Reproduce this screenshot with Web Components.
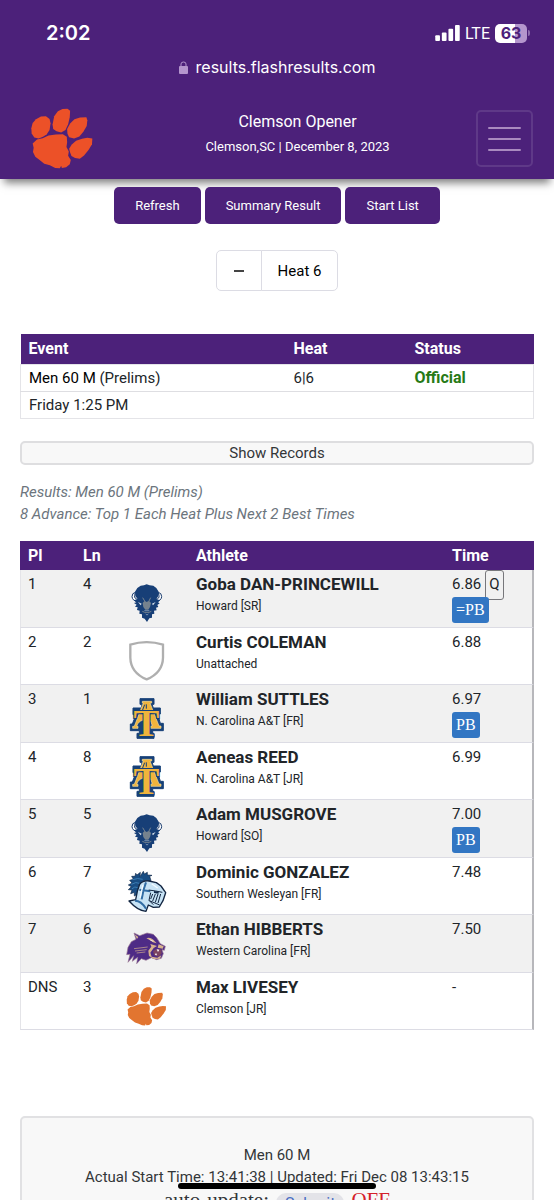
<!DOCTYPE html>
<html lang="en">
<head>
<meta charset="utf-8">
<meta name="viewport" content="width=device-width, initial-scale=1">
<title>Clemson Opener</title>
<style>
  body {
    background: #ffffff;
    color: #212529;
    font-family: Roboto, sans-serif;
    margin: 0;
  }
</style>
</head>
<body>
<flash-app></flash-app>

<script>
// Paw drawing is shared by the header and the Clemson row
const PAW = /* template */ `
  <path d="M94 386 L98 370 L108 359 L123 351 L138 350 L149 358 L152 371 L149 391 L140 405 L129 412 L116 417 L103 414 L95 402 Z"/>
  <path d="M158 375 L163 350 L174 335 L188 328 L203 327 L211 333 L210 352 L205 374 L197 391 L184 399 L170 395 L160 388 Z"/>
  <path d="M203 403 L202 388 L211 372 L224 359 L241 354 L260 353 L263 362 L261 379 L251 397 L239 411 L223 417 L208 413 Z"/>
  <path d="M98 432 L111 420 L128 416 L146 408 L168 405 L189 404 L201 412 L202 428 L200 443 L207 456 L205 469 L213 482 L210 495 L199 504 L186 506 L184 499 L180 507 L166 506 L150 498 L133 493 L119 482 L106 472 L99 458 L101 445 Z"/>
  <path d="M211 459 L208 448 L216 435 L229 424 L247 418 L263 415 L278 417 L277 434 L267 451 L253 468 L240 478 L226 476 L215 470 Z"/>
`;

const LOGOS = {
  clemson: /* template */ `
    <svg viewBox="86 322 206 196" fill="#e27530" aria-hidden="true">${PAW}</svg>`,

  howard: /* template */ `
    <svg viewBox="45 39 132 126" aria-hidden="true">
      <path d="M76 67 Q66 69 66 80 Q67 92 83 95 L84 88 Q72 86 74 77 Z M145 67 Q155 69 155 80 Q154 92 138 95 L137 88 Q149 86 147 77 Z" fill="#ffffff" stroke="#173a6d" stroke-width="3"/>
      <path d="M110 43 L119 46 L130 47 L139 54 L146 65 L145 78 L139 87 L150 91 L144 97 L149 100 L142 105 L145 111 L138 113 L140 121 L132 122 L133 131 L126 133 L126 143 L118 145 L111 156 L104 146 L96 143 L96 133 L88 131 L89 122 L81 120 L83 112 L75 110 L80 104 L72 99 L79 97 L71 91 L83 87 L76 78 L75 65 L82 54 L92 47 L102 46 Z" fill="#173f77"/>
      <path d="M98 99 L104 92 L110 96 L117 92 L123 99 L120 111 L115 119 L106 119 L100 111 Z" fill="#75828e"/>
      <path d="M98 83 L104 93 M122 83 L117 93 M97 124 L104 127 L117 127 L124 124" fill="none" stroke="#75828e" stroke-width="3"/>
      <path d="M84 96 L95 101 L92 106 Z M137 96 L126 101 L129 106 Z" fill="#dce5ed"/>
      <path d="M103 122 H118 M107 132 L111 135 L115 132" fill="none" stroke="#a8b8c8" stroke-width="2"/>
    </svg>`,

  unattached: /* template */ `
    <svg viewBox="45 213 132 126" aria-hidden="true">
      <path d="M61 224 Q110 209 159 224 V263 Q158 308 110 328 Q62 308 61 263 Z" fill="#ffffff" stroke="#afafaf" stroke-width="7"/>
    </svg>`,

  // Initial over a gold tower with a navy edge
  aggies: /* template */ `
    <svg viewBox="45 24 132 126" aria-hidden="true">
      <path d="M90 26 H132 V43 H126 L130 54 H151 V72 H143 L151 100 H160 V122 H128 V130 H132 V145 H81 V130 H88 V122 H61 V102 H67 L78 74 H69 V54 H94 L96 43 H90 Z" fill="#174178" stroke="#174178" stroke-width="3" stroke-linejoin="round"/>
      <path d="M97 34 H125 V39 H120 L147 108 H153 V115 H122 V108 H127 L122 93 Q99 82 83 101 L80 109 H84 V115 H68 V109 H73 L100 39 H97 Z" fill="#f0b43c" stroke="#f7df9f" stroke-width="2"/>
      <path d="M104 44 L97 62 M109 43 V56" stroke="#174178" stroke-width="3"/>
      <text x="109" y="138" font-family="Liberation Serif, serif" font-weight="700" font-size="116" text-anchor="middle" fill="#f0b43c" stroke="#174178" stroke-width="6" paint-order="stroke">T</text>
    </svg>`,

  knight: /* template */ `
    <svg viewBox="45 30 132 126" aria-hidden="true">
      <path d="M90 47 L91 34 L81 42 L77 37 L75 46 L65 46 L70 55 L59 58 L66 66 L55 72 L64 77 L55 86 L66 87 L62 98 L73 94 L73 105 L83 99 L87 71 L101 59 L123 59 L119 46 L126 43 L112 42 L112 34 L103 39 L100 31 Z" fill="#194d83" stroke="#10294a" stroke-width="2"/>
      <path d="M67 56 Q84 50 98 55 M64 70 Q79 61 88 67 M65 84 Q75 74 83 80" fill="none" stroke="#3c7eb4" stroke-width="3"/>
      <path d="M89 70 Q98 58 117 60 L139 65 L153 75 L167 95 L159 119 L148 138 L130 139 L115 132 L108 151 Q84 150 57 120 L77 116 L82 91 Z" fill="#c7e3f5" stroke="#122541" stroke-width="4" stroke-linejoin="round"/>
      <path d="M108 64 L101 85 L95 115 M88 86 L121 91 M75 119 Q94 119 108 143" fill="none" stroke="#326da4" stroke-width="6"/>
      <path d="M116 87 L137 90 L157 94 M122 95 L117 118 L130 131 M118 119 L149 132" fill="none" stroke="#122541" stroke-width="3"/>
      <path d="M128 99 L122 114 M136 99 L128 120 M144 99 L136 124 M152 99 L144 126" fill="none" stroke="#122541" stroke-width="3"/>
      <path d="M132 93 L146 95" stroke="#10294a" stroke-width="6"/>
      <path d="M99 72 L90 111 M125 68 L143 81" fill="none" stroke="#f3fbff" stroke-width="4"/>
    </svg>`,

  catamount: /* template */ `
    <svg viewBox="45 204 132 126" aria-hidden="true">
      <path d="M72 219 L89 227 L111 219 L130 223 L140 233 L151 251 L166 259 L163 271 L156 269 L160 281 L154 295 L140 299 L124 293 L108 301 L94 296 L80 311 L83 292 L67 304 L71 287 L54 307 L60 283 L50 284 L54 262 L64 245 L78 238 Z" fill="#4e2b86" stroke="#9b7892" stroke-width="2"/>
      <path d="M74 223 L85 231 L81 237 M109 235 Q119 230 130 239 L140 250 L129 247 L119 240 Z M146 253 L161 259 L158 266 L143 263 Z" fill="#d8b38e"/>
      <path d="M121 252 L141 258 L131 264 L121 278 L125 290 L142 293 L154 286 L150 296 L132 297 L117 288 L115 272 L124 260 Z" fill="#d8b38e"/>
      <path d="M129 273 L142 266 L154 269 L155 281 L145 290 L132 286 Z" fill="#7c4461"/>
      <path d="M140 268 L144 276 L148 269 M135 285 L138 278 L141 286" fill="#ffffff"/>
      <path d="M72 266 L113 261 M75 273 L110 269 M80 279 L106 276" stroke="#d8b38e" stroke-width="2"/>
      <path d="M119 239 L130 244" stroke="#ffffff" stroke-width="2"/>
    </svg>`
};

const RESULTS = [
  {place: '1', lane: '4', logo: 'howard', name: 'Goba DAN-PRINCEWILL', team: 'Howard [SR]', time: '6.86', qualified: 'Q', best: '=PB'},
  {place: '2', lane: '2', logo: 'unattached', name: 'Curtis COLEMAN', team: 'Unattached', time: '6.88'},
  {place: '3', lane: '1', logo: 'aggies', name: 'William SUTTLES', team: 'N. Carolina A&amp;T [FR]', time: '6.97', best: 'PB'},
  {place: '4', lane: '8', logo: 'aggies', name: 'Aeneas REED', team: 'N. Carolina A&amp;T [JR]', time: '6.99'},
  {place: '5', lane: '5', logo: 'howard', name: 'Adam MUSGROVE', team: 'Howard [SO]', time: '7.00', best: 'PB'},
  {place: '6', lane: '7', logo: 'knight', name: 'Dominic GONZALEZ', team: 'Southern Wesleyan [FR]', time: '7.48'},
  {place: '7', lane: '6', logo: 'catamount', name: 'Ethan HIBBERTS', team: 'Western Carolina [FR]', time: '7.50'},
  {place: 'DNS', lane: '3', logo: 'clemson', name: 'Max LIVESEY', team: 'Clemson [JR]', time: '-'}
];

// Shared by every element
// Puts the markup in an open root
class FlashElement extends HTMLElement {
  constructor() {
    super();

    const template = document.createElement( 'template' );
    template.innerHTML = this.constructor.markup;

    const shadowRoot = this.attachShadow( {mode: 'open'} );
    shadowRoot.appendChild( template.content.cloneNode( true ) );
  }
}

class FlashStatusBar extends FlashElement {
  static markup = /* template */ `
    <style>
      :host {
        background: #4c217a;
        color: #ffffff;
        display: block;
        font-family: Inter, sans-serif;
      }

      .device {
        align-items: center;
        display: flex;
        height: 34px;
        justify-content: space-between;
        padding: 16px 24px 0 46px;
      }

      .clock {
        font-size: 20px;
        font-weight: 600;
      }

      .signal {
        align-items: center;
        display: flex;
        font-family: Roboto, sans-serif;
        font-size: 16px;
        gap: 5px;
      }

      .battery {
        align-items: center;
        background: linear-gradient( 90deg, #ffffff 63%, #b496cd 63% );
        border-radius: 5px;
        color: #4c217a;
        display: flex;
        font-family: Inter, sans-serif;
        font-size: 16px;
        font-weight: 700;
        height: 19px;
        justify-content: center;
        width: 32px;
      }

      .level {
        align-items: center;
        display: flex;
        gap: 1px;
      }

      .tip {
        background: #8d6cad;
        border-radius: 0 2px 2px 0;
        height: 6px;
        width: 2px;
      }

      .address {
        align-items: center;
        display: flex;
        font-size: 16px;
        gap: 8px;
        height: 34px;
        justify-content: center;
      }
    </style>
    <div class="device">
      <span class="clock">2:02</span>
      <div class="signal">
        <svg width="25" height="16" viewBox="0 0 26 17" fill="#ffffff" aria-hidden="true">
          <rect x="0" y="11" width="5" height="6" rx="1"/>
          <rect x="7" y="8" width="5" height="9" rx="1"/>
          <rect x="14" y="4" width="5" height="13" rx="1"/>
          <rect x="21" y="0" width="5" height="17" rx="1"/>
        </svg>
        <span>LTE</span>
        <div class="level"><span class="battery">63</span><span class="tip"></span></div>
      </div>
    </div>
    <div class="address">
      <svg width="9" height="13" viewBox="0 0 9 13" aria-hidden="true">
        <path d="M2 6 V3 Q2 1 4.500 1 Q7 1 7 3 V6" fill="none" stroke="#b496cd" stroke-width="1"/>
        <rect x="0" y="5" width="9" height="8" rx="1" fill="#b496cd"/>
      </svg>
      <span>results.flashresults.com</span>
    </div>
  `;
}

class FlashHeader extends FlashElement {
  static markup = /* template */ `
    <style>
      :host {
        align-items: center;
        background: #4c217a;
        box-shadow: 0 8px 8px -4px rgba( 0, 0, 0, 0.5 );
        box-sizing: border-box;
        color: #ffffff;
        display: flex;
        height: 95px;
        justify-content: space-between;
        padding: 13px 21px 0 30px;
      }

      .logo {
        height: 61px;
        width: 63px;
      }

      .title {
        display: flex;
        flex-direction: column;
        gap: 3px;
        padding: 0 0 10px 26px;
        text-align: center;
      }

      ::slotted( * ) {
        font-size: 13px;
        font-weight: 400;
        line-height: 20px;
        margin: 0;
      }

      ::slotted( h1 ) {
        font-size: 16px;
        line-height: 24px;
      }

      button {
        align-items: center;
        background: none;
        border: 2px solid #5f3988;
        border-radius: 5px;
        display: flex;
        height: 57px;
        justify-content: center;
        padding: 0;
        width: 57px;
      }
    </style>
    <svg class="logo" viewBox="90 325 190 184" fill="#ec5128" aria-hidden="true">${PAW}</svg>
    <div class="title"><slot></slot></div>
    <button type="button" aria-label="Menu">
      <svg width="33" height="25" viewBox="0 0 33 25" stroke="#a98abf" stroke-width="2" stroke-linecap="round" aria-hidden="true">
        <path d="M1 2 H32 M1 13 H32 M1 24 H32"/>
      </svg>
    </button>
  `;
}

class FlashButton extends FlashElement {
  static markup = /* template */ `
    <style>
      :host {
        display: block;
      }

      button {
        background: #4c217a;
        border: none;
        border-radius: 5px;
        color: #ffffff;
        font-family: inherit;
        font-size: 13px;
        height: 37px;
        padding: 0 21px;
      }
    </style>
    <button type="button"><slot></slot></button>
  `;
}

class FlashHeatPicker extends FlashElement {
  static markup = /* template */ `
    <style>
      :host {
        display: flex;
        justify-content: center;
      }

      button {
        background: #ffffff;
        border: 1px solid #dcdce4;
        border-radius: 0 5px 5px 0;
        color: #000000;
        font-family: inherit;
        font-size: 15px;
        height: 41px;
        margin-left: -1px;
        padding: 0 16px;
      }

      button:first-of-type {
        border-radius: 5px 0 0 5px;
        margin-left: 0;
        width: 46px;
      }
    </style>
    <button type="button" aria-label="Previous heat">
      <svg width="12" height="10" viewBox="0 0 12 10" aria-hidden="true"><path d="M1 5 H11" stroke="#444444" stroke-width="2"/></svg>
    </button>
    <button type="button"><slot></slot></button>
  `;
}

class FlashEventTable extends FlashElement {
  static markup = /* template */ `
    <style>
      :host {
        display: block;
      }

      table {
        border-collapse: collapse;
        font-size: 15px;
        line-height: 20px;
        table-layout: fixed;
        width: 100%;
      }

      th, td {
        box-sizing: border-box;
        padding: 3px 8px;
        text-align: left;
      }

      th {
        background: #4c217a;
        color: #ffffff;
        font-size: 16px;
        padding: 5px 8px;
      }

      th:nth-child( 2 ) { width: 121px; }
      th:nth-child( 3 ) { width: 127px; }

      tbody {
        border: 1px solid #e4e4e8;
      }

      tbody tr + tr {
        border-top: 1px solid #dedee2;
      }

      a {
        color: #000000;
        text-decoration: none;
      }

      strong {
        color: #277a16;
        font-size: 16px;
      }
    </style>
    <table>
      <thead>
        <tr><th>Event</th><th>Heat</th><th>Status</th></tr>
      </thead>
      <tbody>
        <tr><td><a href="#event">Men 60 M</a> (Prelims)</td><td>6|6</td><td><strong>Official</strong></td></tr>
        <tr><td colspan="3">Friday 1:25 PM</td></tr>
      </tbody>
    </table>
  `;
}

class FlashTeamLogo extends FlashElement {
  static markup = /* template */ `
    <style>
      :host {
        display: block;
        height: 42px;
        width: 44px;
      }

      svg {
        display: block;
        height: 42px;
        width: 44px;
      }
    </style>
    <div></div>
  `;

  static get observedAttributes() {
    return ['name'];
  }

  attributeChangedCallback( name, old, value ) {
    this.shadowRoot.querySelector( 'div' ).innerHTML = LOGOS[value];
  }
}

class FlashResults extends FlashElement {
  static markup = /* template */ `
    <style>
      :host {
        display: block;
      }

      table {
        border-collapse: separate;
        border-spacing: 0;
        font-size: 15px;
        line-height: 20px;
        table-layout: fixed;
        width: 100%;
      }

      th {
        background: #4c217a;
        color: #ffffff;
        font-size: 16px;
        padding: 5px 8px 4px 8px;
        text-align: left;
      }

      th:nth-child( 1 ) { width: 39px; }
      th:nth-child( 2 ) { width: 14px; }
      th:nth-child( 3 ) { width: 67px; }
      th:nth-child( 5 ) { width: 74px; }

      td {
        border-bottom: 1px solid #dcdce4;
        height: 53px;
        padding: 4px 8px 0 8px;
        vertical-align: top;
      }

      tr:nth-child( even ) td {
        height: 52px;
      }

      tbody tr:nth-child( odd ) td {
        background: #f1f1f1;
      }

      td:first-child {
        border-left: 1px solid #e4e4e8;
        padding-left: 7px;
      }

      td:last-child {
        border-right: 2px solid #b7b7bb;
        padding-right: 0;
      }

      td.logo {
        padding: 13px 0 0 20px;
        height: 44px;
      }

      tr:nth-child( even ) td.logo {
        height: 43px;
      }

      .name {
        display: block;
        font-size: 17px;
        font-weight: 700;
      }

      .team {
        display: block;
        font-size: 12px;
        line-height: 24px;
      }

      .time {
        display: flex;
        gap: 4px;
      }

      .qualified {
        border: 1px solid #77777b;
        border-radius: 3px;
        box-sizing: border-box;
        height: 30px;
        line-height: 26px;
        margin: -4px 0 -6px 0;
        padding: 0 3px;
      }

      .best {
        background: #3276c3;
        border-radius: 3px;
        color: #ffffff;
        display: inline-block;
        font-family: 'Liberation Serif', serif;
        font-size: 16px;
        line-height: 26px;
        margin-top: 3px;
        padding: 0 4px;
        position: relative;
      }
    </style>
    <table>
      <thead>
        <tr><th>Pl</th><th>Ln</th><th></th><th>Athlete</th><th>Time</th></tr>
      </thead>
      <tbody></tbody>
    </table>
  `;

  connectedCallback() {
    this.shadowRoot.querySelector( 'tbody' ).innerHTML = RESULTS.map( ( row ) => `
      <tr>
        <td>${row.place}</td>
        <td>${row.lane}</td>
        <td class="logo"><flash-team-logo name="${row.logo}"></flash-team-logo></td>
        <td><span class="name">${row.name}</span><span class="team">${row.team}</span></td>
        <td>
          <div class="time"><span>${row.time}</span>${row.qualified ? `<span class="qualified">${row.qualified}</span>` : ''}</div>
          ${row.best ? `<span class="best">${row.best}</span>` : ''}
        </td>
      </tr>
    ` ).join( '' );
  }
}

class FlashFooter extends FlashElement {
  static markup = /* template */ `
    <style>
      :host {
        background: #f8f8f8;
        border: 2px solid #e1e1e3;
        border-radius: 5px;
        color: #333638;
        display: block;
        font-size: 15px;
        line-height: 22px;
        padding: 26px 8px;
        text-align: center;
      }

      p {
        margin: 0;
      }

      .update {
        align-items: flex-start;
        display: flex;
        font-family: 'Liberation Serif', serif;
        font-size: 21px;
        gap: 7px;
        justify-content: center;
        line-height: 24px;
      }

      button {
        background: #e3e3e8;
        border: none;
        border-radius: 10px;
        color: #4b6fc4;
        font-family: Roboto, sans-serif;
        font-size: 16px;
        height: 20px;
        margin-top: 5px;
        padding: 0 9px;
      }

      .off {
        color: #d5202a;
      }
    </style>
    <p>Men 60 M</p>
    <p>Actual Start Time: 13:41:38 | Updated: Fri Dec 08 13:43:15</p>
    <div class="update">
      <span>auto-update:</span>
      <button type="button">Submit</button>
      <span class="off">OFF</span>
    </div>
  `;
}

class FlashApp extends FlashElement {
  static markup = /* template */ `
    <style>
      :host {
        display: block;
        height: 100vh;
        overflow: hidden;
        position: relative;
      }

      nav {
        display: flex;
        gap: 4px;
        justify-content: center;
        padding: 8px 0 26px 0;
      }

      main {
        padding: 43px 20px 0 20px;
      }

      .records {
        background: #f8f8f8;
        border: 2px solid #dedee0;
        border-radius: 5px;
        color: #333638;
        display: block;
        font-family: inherit;
        font-size: 15px;
        height: 24px;
        line-height: 20px;
        margin: 22px 0 16px 0;
        padding: 0;
        width: 100%;
      }

      .note {
        color: #6c757d;
        font-size: 15px;
        font-style: italic;
        line-height: 22px;
        margin: 0 0 16px 0;
      }

      flash-footer {
        margin-top: 86px;
      }

      /* Home indicator floats over the page */
      .indicator {
        background: #000000;
        border-radius: 4px;
        bottom: 11px;
        height: 6px;
        left: 0;
        margin: 0 auto;
        position: absolute;
        right: 0;
        width: 198px;
      }
    </style>
    <flash-status-bar></flash-status-bar>
    <flash-header>
      <h1>Clemson Opener</h1>
      <p>Clemson,SC | December 8, 2023</p>
    </flash-header>
    <nav>
      <flash-button>Refresh</flash-button>
      <flash-button>Summary Result</flash-button>
      <flash-button>Start List</flash-button>
    </nav>
    <flash-heat-picker>Heat 6</flash-heat-picker>
    <main>
      <flash-event-table></flash-event-table>
      <button class="records" type="button">Show Records</button>
      <p class="note">Results: Men 60 M (Prelims)<br>8 Advance: Top 1 Each Heat Plus Next 2 Best Times</p>
      <flash-results></flash-results>
      <flash-footer></flash-footer>
    </main>
    <div class="indicator"></div>
  `;
}

window.customElements.define( 'flash-status-bar', FlashStatusBar );
window.customElements.define( 'flash-header', FlashHeader );
window.customElements.define( 'flash-button', FlashButton );
window.customElements.define( 'flash-heat-picker', FlashHeatPicker );
window.customElements.define( 'flash-event-table', FlashEventTable );
window.customElements.define( 'flash-team-logo', FlashTeamLogo );
window.customElements.define( 'flash-results', FlashResults );
window.customElements.define( 'flash-footer', FlashFooter );
window.customElements.define( 'flash-app', FlashApp );
</script>
</body>
</html>
